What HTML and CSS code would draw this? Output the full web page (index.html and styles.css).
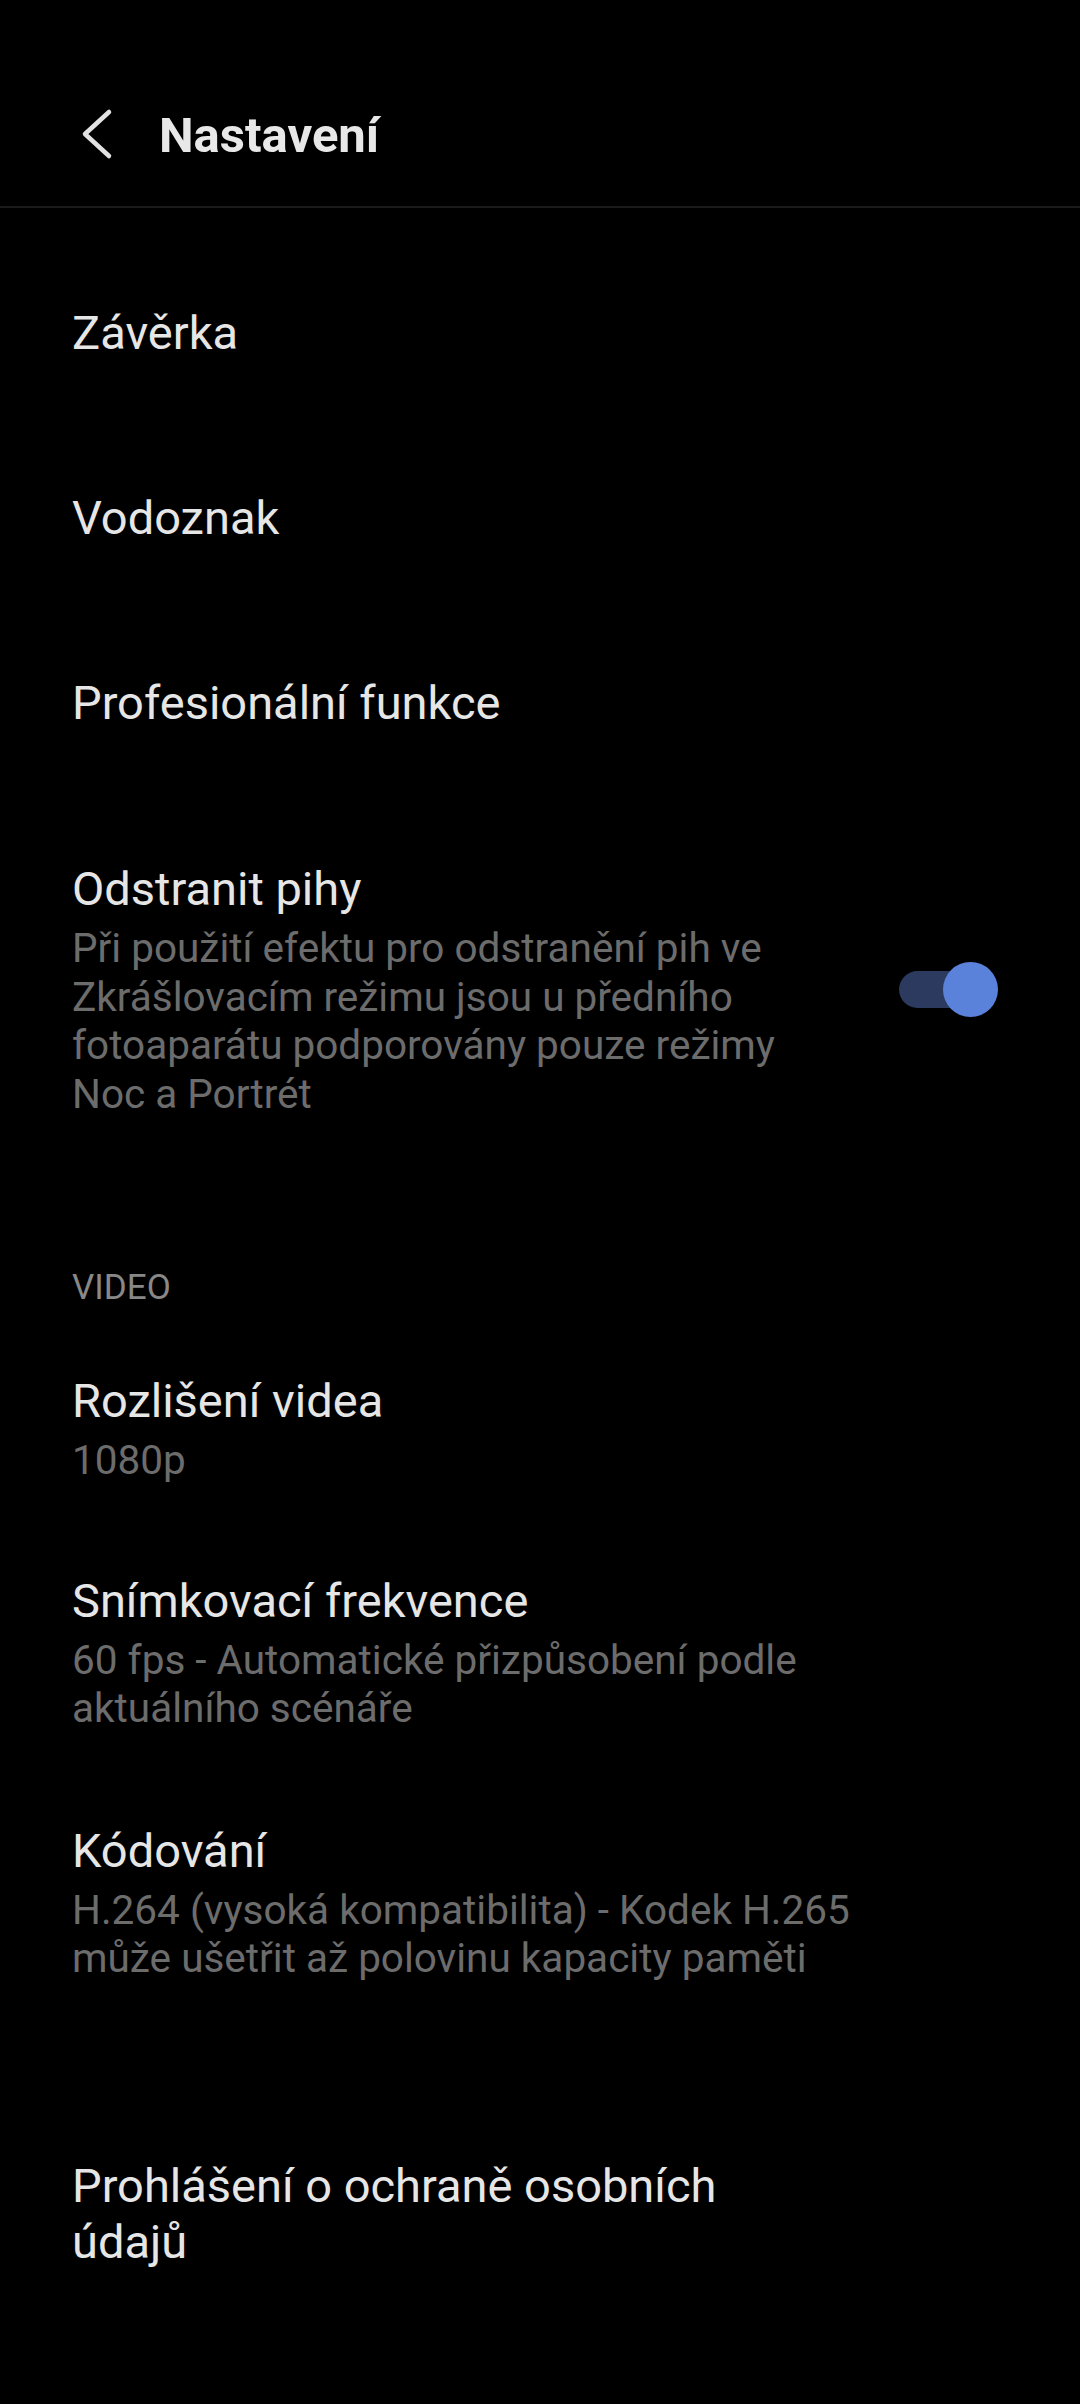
FILE: index.html
```html
<!DOCTYPE html>
<html lang="cs">
<head>
  <meta charset="UTF-8">
  <meta name="viewport" content="width=device-width, initial-scale=1.0">
  <title>Nastavení</title>
  <link rel="stylesheet" href="styles.css">
</head>
<body>
  <div class="header">
    <svg class="back" width="40" height="56" viewBox="0 0 40 56">
      <polyline points="33,6 9,28 33,50" fill="none" stroke="#e2e2e2" stroke-width="4.5" stroke-linecap="round" stroke-linejoin="round"/>
    </svg>
    <h1 class="header-title">Nastavení</h1>
  </div>

  <div class="list">
    <div class="row"><div class="text"><div class="title">Závěrka</div></div></div>
    <div class="row"><div class="text"><div class="title">Vodoznak</div></div></div>
    <div class="row"><div class="text"><div class="title">Profesionální funkce</div></div></div>
    <div class="row row-switch">
      <div class="text">
        <div class="title">Odstranit pihy</div>
        <div class="summary">Při použití efektu pro odstranění pih ve Zkrášlovacím režimu jsou u předního fotoaparátu podporovány pouze režimy Noc a Portrét</div>
      </div>
      <div class="switch on"><div class="thumb"></div></div>
    </div>

    <div class="category">VIDEO</div>
    <div class="row">
      <div class="text">
        <div class="title">Rozlišení videa</div>
        <div class="summary">1080p</div>
      </div>
    </div>
    <div class="row">
      <div class="text">
        <div class="title">Snímkovací frekvence</div>
        <div class="summary">60 fps - Automatické přizpůsobení podle aktuálního scénáře</div>
      </div>
    </div>
    <div class="row row-last">
      <div class="text">
        <div class="title">Kódování</div>
        <div class="summary">H.264 (vysoká kompatibilita) - Kodek H.265 může ušetřit až polovinu kapacity paměti</div>
      </div>
    </div>

    <div class="group">
      <div class="row">
        <div class="text text-narrow">
          <div class="title">Prohlášení o ochraně osobních údajů</div>
        </div>
      </div>
    </div>
  </div>
</body>
</html>
```

FILE: styles.css
```css
body {
  margin: 0;
  background: #000;
  color: #e6e6e6;
  font-family: Roboto, "Noto Sans", sans-serif;
  width: 1080px;
  min-height: 2404px;
}
.header {
  height: 208px;
  display: flex;
  align-items: center;
  padding: 66px 0 0 76px;
  border-bottom: 2px solid #1a1a1a;
  box-sizing: border-box;
}
.back {
  margin-top: -4px;
}
.header-title {
  margin: -2px 0 0 43px;
  font-size: 49px;
  font-weight: 700;
  color: #e8e8e8;
}
.list {
  padding-top: 32px;
}
.row {
  min-height: 185px;
  box-sizing: border-box;
  padding: 44px 72px;
  display: flex;
  align-items: center;
  justify-content: space-between;
}
.row-switch {
  padding-top: 66px;
}
.row-last {
  padding-top: 46px;
}
.text {
  max-width: 783px;
}
.text-narrow {
  max-width: 700px;
}
.title {
  font-size: 47px;
  line-height: 56px;
}
.summary {
  margin-top: 7px;
  font-size: 40.5px;
  line-height: 48.5px;
  color: #6c6c6c;
}
.category {
  padding: 106px 72px 21px;
  font-size: 35px;
  line-height: 40px;
  color: #888;
}
.group {
  margin-top: 87px;
}
.switch {
  position: relative;
  width: 90px;
  height: 37px;
  border-radius: 19px;
  background: #2b3a5e;
  margin-right: 19px;
  flex-shrink: 0;
}
.switch .thumb {
  position: absolute;
  right: -9px;
  top: -9px;
  width: 55px;
  height: 55px;
  border-radius: 50%;
  background: #5b82db;
}
```
